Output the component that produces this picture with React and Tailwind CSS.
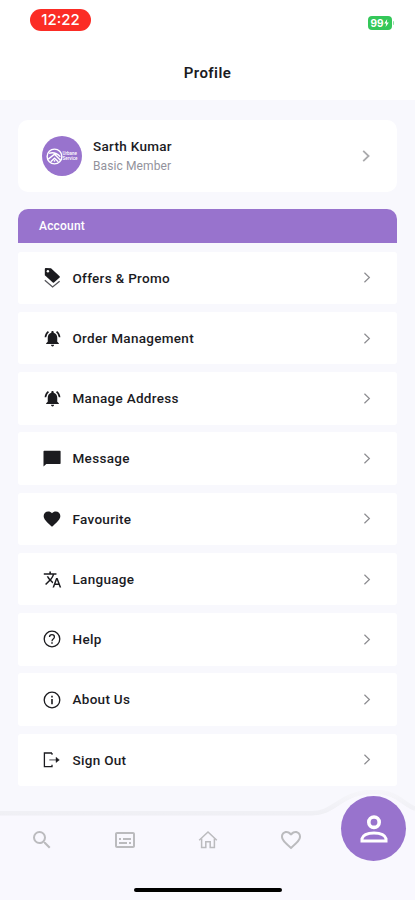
import {
	MdFavorite,
	MdFavoriteBorder,
	MdNotificationsActive,
	MdOutlineSubtitles,
	MdSearch,
	MdTranslate,
} from 'react-icons/md';

const TagsIcon = () => (
	<svg viewBox="0 0 18 22" className="h-[22px] w-[18px]" fill="none">
		<path d="M1.8 2Q1.8 1 2.8 1L8 1.2L16.6 9.3Q17.2 10 16.6 10.6L11 15.5Q10.4 16 9.8 15.5L1.8 8.2Z" fill="#1b1b1f" />
		<circle cx="4.9" cy="4.3" r="1.2" fill="#fff" />
		<path d="M1.8 13.2L9.6 20L16.6 14.2" stroke="#55555a" strokeWidth="1.3" />
	</svg>
);

const MessageIcon = () => (
	<svg viewBox="0 0 18 18" className="size-[18px]" fill="currentColor">
		<path d="M.5 1.5Q.5 .8 1.2 .8H17Q17.6 .8 17.6 1.5V13.3Q17.6 14 17 14H3.3L.5 16.6Z" />
	</svg>
);

const HelpIcon = () => (
	<svg viewBox="0 0 18 18" className="size-[18px]" fill="none" stroke="currentColor" strokeWidth="1.3">
		<circle cx="9" cy="9" r="7.8" />
		<path d="M6.5 7Q6.5 4.7 9 4.7Q11.4 4.7 11.4 6.9Q11.4 8 10.2 8.9Q9 9.8 9 11.2" />
		<path d="M9 12.3V13.8" strokeWidth="1.5" />
	</svg>
);

const InfoIcon = () => (
	<svg viewBox="0 0 18 18" className="size-[18px]" fill="none" stroke="currentColor" strokeWidth="1.3">
		<circle cx="9" cy="9" r="7.8" />
		<path d="M9 4.7V6.4M9 7.9V13.2" strokeWidth="1.6" />
	</svg>
);

const SignOutIcon = () => (
	<svg viewBox="0 0 18 18" className="size-[18px]" fill="none" stroke="currentColor" strokeWidth="1.3">
		<path d="M9 2H1.4V15.6H9V13.8M9 2V3.8" />
		<path d="M6.3 8.9H13.6" stroke="#77777b" />
		<path d="M13 6.2L16.4 8.9L13 11.6Z" fill="currentColor" strokeWidth=".4" />
	</svg>
);

const HomeIcon = () => (
	<svg viewBox="0 0 20 20" className="size-5" fill="none" stroke="currentColor" strokeWidth="1.5">
		<path d="M1.2 10.3L10 2L18.8 10.3" />
		<path d="M3.6 8.6V17.6H7.8V11.8H12.2V17.6H16.4V8.6" />
	</svg>
);

const PersonIcon = () => (
	<svg viewBox="0 0 28 28" className="size-7" fill="none" stroke="currentColor">
		<circle cx="14" cy="7.2" r="5.2" strokeWidth="3.6" />
		<path d="M2 26V23.6C3.2 19.4 9 17.9 14 17.9C19 17.9 24.8 19.4 26 23.6V26Z" strokeWidth="3" />
	</svg>
);

const Chevron = ({ small }) => (
	<svg
		viewBox="0 0 8 12"
		className={small ? 'h-[11px] w-[8px] text-[#8c8c90]' : 'h-3 w-2 text-[#aaaaad]'}
		fill="none"
		stroke="currentColor"
		strokeWidth={small ? 1.3 : 1.8}
	>
		<path d="M1.2 .8L6.6 6L1.2 11.2" />
	</svg>
);

const Logo = () => (
	<div className="flex size-10 shrink-0 items-center rounded-full bg-[#9873cd] pl-[3.5px] text-white">
		<svg viewBox="0 0 18 18" className="size-[17px] shrink-0" fill="none" stroke="currentColor">
			<circle cx="9" cy="9" r="7.8" strokeWidth="1.5" />
			<path d="M3.2 5.8Q9 3.2 15.2 9.2M2.4 11.8L9 6.6L15.4 13M5 14.6L9 10.8L13 14.6" strokeWidth="1.5" />
			<circle cx="9" cy="13.6" r=".9" fill="currentColor" stroke="none" />
		</svg>
		<div className="text-[4.5px] leading-[5.5px] font-medium">
			<p>Urbane</p>
			<p>Service</p>
		</div>
	</div>
);

const items = [
	{ label: 'Offers & Promo', icon: <TagsIcon /> },
	{ label: 'Order Management', icon: <MdNotificationsActive size={19} /> },
	{ label: 'Manage Address', icon: <MdNotificationsActive size={19} /> },
	{ label: 'Message', icon: <MessageIcon /> },
	{ label: 'Favourite', icon: <MdFavorite size={20} /> },
	{ label: 'Language', icon: <MdTranslate size={19} /> },
	{ label: 'Help', icon: <HelpIcon /> },
	{ label: 'About Us', icon: <InfoIcon /> },
	{ label: 'Sign Out', icon: <SignOutIcon /> },
];

const StatusBar = () => (
	<div className="flex h-[46px] items-start justify-between pt-[9px] pr-[21px] pl-[30px]">
		<div className="flex h-[22px] w-[61px] items-center justify-center rounded-full bg-[#fb2c25] font-['Inter',sans-serif] text-[15px] font-medium text-white">
			12:22
		</div>
		<div className="mt-[7px] flex items-center">
			<div className="flex h-[14px] w-6 items-center justify-center rounded-[4px] bg-[#34c759] font-['Inter',sans-serif] text-[10px] font-bold text-white">
				99
				<svg viewBox="0 0 5 8" className="h-2 w-[5px]" fill="currentColor">
					<path d="M3.2 0L.2 4.5H2.2L1.6 8L4.8 3.4H2.8Z" />
				</svg>
			</div>
			<div className="ml-px h-1 w-[1.5px] rounded-r-full bg-[#8fe0a4]" />
		</div>
	</div>
);

const BottomNav = () => (
	<nav className="relative mt-auto h-[110px] shrink-0">
		{/* bar outline with the bump around the active tab */}
		<svg viewBox="0 0 415 110" className="absolute inset-0 h-[110px] w-[415px]" fill="none">
			<defs>
				<linearGradient id="navEdge" gradientUnits="userSpaceOnUse" x1="0" y1="0" x2="0" y2="26">
					<stop offset="0" stopColor="#f6f6fa" />
					<stop offset="1" stopColor="#efeff4" />
				</linearGradient>
			</defs>
			<path d="M0 23.5H312C335 23.5 340 2 374 2C398 2 402 14 415 19" stroke="url(#navEdge)" strokeWidth="5" />
			<path d="M0 25.5H312C337 25.5 342 4 374 4C396 4 401 16 415 21V110H0Z" fill="#f9f8fe" />
		</svg>
		<div className="relative flex h-full flex-col justify-between pt-[38px] pb-[8px]">
			<div className="flex pr-[83px] text-[#bbbbbe]">
				<div className="flex flex-1 justify-center">
					<MdSearch size={24} />
				</div>
				<div className="flex flex-1 justify-center">
					<MdOutlineSubtitles size={24} />
				</div>
				<div className="flex flex-1 items-center justify-center">
					<HomeIcon />
				</div>
				<div className="flex flex-1 justify-center">
					<MdFavoriteBorder size={24} />
				</div>
			</div>
			<div className="h-1 w-[148px] self-center rounded-full bg-black" />
		</div>
		<button className="absolute top-[6px] right-[9px] flex size-[65px] items-center justify-center rounded-full bg-[#9873cd] text-white">
			<PersonIcon />
		</button>
	</nav>
);

const App = () => {
	return (
		<div className="flex h-[900px] w-[415px] flex-col overflow-hidden bg-[#f8f8fd] font-['Roboto',sans-serif] text-[#1b1b1f]">
			<header className="h-[100px] shrink-0 bg-white">
				<StatusBar />
				<h1 className="pt-[15px] text-center text-[15px] leading-6 font-semibold tracking-[0.4px]">Profile</h1>
			</header>

			<main className="px-[18px] pt-[20px]">
				<section className="flex h-[72px] items-center rounded-[10px] bg-white pr-[27px] pl-6">
					<Logo />
					<div className="ml-[11px] flex-1">
						<p className="text-[13.5px] leading-5 font-medium tracking-[0.3px]">Sarth Kumar</p>
						<p className="text-[12px] leading-5 tracking-[0.1px] text-[#92929c]">Basic Member</p>
					</div>
					<Chevron />
				</section>

				<h2 className="mt-[17px] h-[34px] rounded-t-[10px] bg-[#9873cd] pl-[21px] text-[12px] leading-[35px] font-medium tracking-[0.2px] text-white">
					Account
				</h2>
				<ul className="mt-[8.5px] flex flex-col gap-[7.75px]">
					{items.map((item) => (
						<li key={item.label} className="flex h-[52.5px] items-center rounded-[3px] bg-white pr-[26px] pl-[24px]">
							<span className="flex w-5 justify-center">{item.icon}</span>
							<span className="ml-[10.5px] flex-1 text-[13.5px] font-medium tracking-[0.3px]">{item.label}</span>
							<Chevron small />
						</li>
					))}
				</ul>
			</main>

			<BottomNav />
		</div>
	);
};

export default App;
